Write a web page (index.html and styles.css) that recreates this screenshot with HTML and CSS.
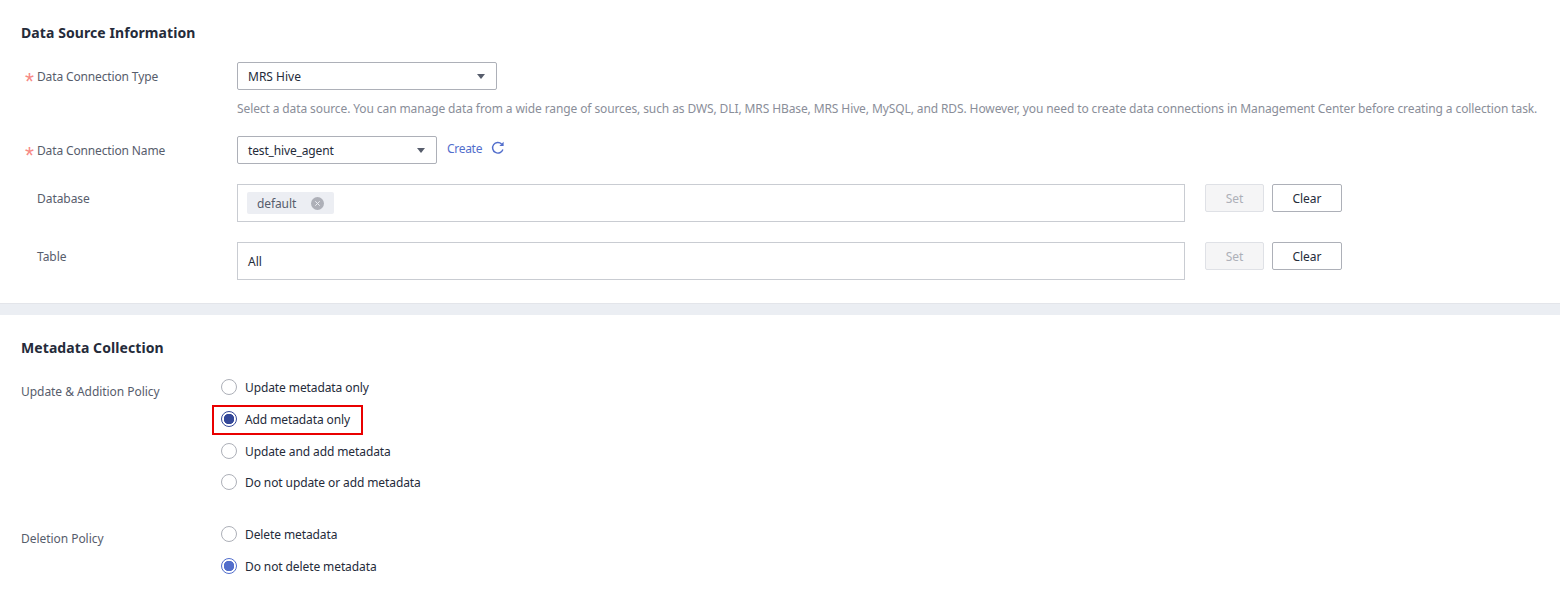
FILE: index.html
```html
<!DOCTYPE html>
<html lang="en">
<head>
<meta charset="utf-8">
<title>Data Source Information</title>
<link rel="stylesheet" href="styles.css">
</head>
<body>
<section class="panel panel-source">
  <h2 class="title">Data Source Information</h2>
  <div class="row row-type">
    <label class="label"><span class="req">*</span>Data Connection Type</label>
    <div class="field">
      <div class="select select-wide"><span>MRS Hive</span><i class="caret"></i></div>
      <p class="hint">Select a data source. You can manage data from a wide range of sources, such as DWS, DLI, MRS HBase, MRS Hive, MySQL, and RDS. However, you need to create data connections in Management Center before creating a collection task.</p>
    </div>
  </div>
  <div class="row row-name">
    <label class="label"><span class="req">*</span>Data Connection Name</label>
    <div class="field field-inline">
      <div class="select select-narrow"><span class="select-name">test_hive_agent</span><i class="caret"></i></div>
      <a class="link">Create</a>
      <svg class="refresh" width="14" height="14" viewBox="0 0 14 14"><path d="M11.9 8.6A5.3 5.3 0 1 1 10.6 3" fill="none" stroke="#526ecc" stroke-width="1.4"/><path d="M12.6 0.8V5H8.4z" fill="#526ecc"/></svg>
    </div>
  </div>
  <div class="row row-box row-db">
    <label class="label label-plain">Database</label>
    <div class="box"><span class="tag">default<svg class="tag-x" width="13" height="13" viewBox="0 0 13 13"><circle cx="6.5" cy="6.5" r="6.5" fill="#aeb0b8"/><path d="M4.3 4.3l4.4 4.4M8.7 4.3l-4.4 4.4" stroke="#eceef3" stroke-width="1"/></svg></span></div>
    <button class="btn btn-off">Set</button>
    <button class="btn">Clear</button>
  </div>
  <div class="row row-box row-table">
    <label class="label label-plain">Table</label>
    <div class="box box-text">All</div>
    <button class="btn btn-off">Set</button>
    <button class="btn">Clear</button>
  </div>
</section>
<div class="band"></div>
<section class="panel panel-meta">
  <h2 class="title">Metadata Collection</h2>
  <div class="policy policy-update">
    <div class="policy-label">Update &amp; Addition Policy</div>
    <div class="radios">
      <div class="radio"><i class="dot"></i>Update metadata only</div>
      <div class="radio marked"><i class="dot dot-dark"></i>Add metadata only</div>
      <div class="radio radio-short"><i class="dot"></i>Update and add metadata</div>
      <div class="radio"><i class="dot"></i>Do not update or add metadata</div>
    </div>
  </div>
  <div class="policy policy-delete">
    <div class="policy-label">Deletion Policy</div>
    <div class="radios">
      <div class="radio"><i class="dot"></i>Delete metadata</div>
      <div class="radio"><i class="dot dot-on"></i>Do not delete metadata</div>
    </div>
  </div>
</section>
</body>
</html>
```
FILE: styles.css
```css
* { box-sizing: border-box; }
html, body { margin: 0; padding: 0; }
body {
  width: 1560px;
  height: 593px;
  overflow: hidden;
  background: #fff;
  font-family: "Noto Sans", "Open Sans", sans-serif;
  font-size: 12px;
  color: #252b3a;
}
.panel { padding-left: 21px; }
.panel-source { height: 303px; padding-top: 23px; }
.panel-meta { padding-top: 23px; }
.title {
  margin: 0;
  font-size: 14px;
  font-weight: 700;
  line-height: 20px;
  letter-spacing: 0.08px;
  color: #252b3a;
}
.row { display: flex; align-items: flex-start; }
.row-type { margin-top: 19px; }
.row-name { margin-top: 17px; }
.row-db { margin-top: 19px; }
.row-table { margin-top: 20px; }
.label {
  width: 216px;
  height: 29px;
  flex: none;
  padding-top: 1px;
  line-height: 28px;
  color: #575d6c;
  padding-left: 4px;
  letter-spacing: -0.14px;
}
.label-plain { padding-left: 16px; letter-spacing: -0.05px; }
.req {
  display: inline-block;
  width: 12px;
  color: #f78a86;
  font-family: "Liberation Sans", sans-serif;
  font-size: 23px;
  line-height: 1;
  vertical-align: -9px;
}
.field { flex: 1; min-width: 0; }
.field-inline { display: flex; align-items: flex-start; }
.select {
  height: 28px;
  border: 1px solid #adb0b8;
  border-radius: 2px;
  display: flex;
  align-items: center;
  justify-content: space-between;
  padding: 0 11px 0 10px;
  color: #252b3a;
}
.select-wide { width: 260px; }
.select-narrow { width: 200px; }
.select-name { letter-spacing: -0.15px; }
.caret {
  width: 0;
  height: 0;
  border-left: 4.5px solid transparent;
  border-right: 4.5px solid transparent;
  border-top: 5px solid #575d6c;
}
.hint {
  margin: 9px 0 0;
  line-height: 20px;
  color: #8a8e99;
  white-space: nowrap;
  letter-spacing: -0.105px;
}
.link { margin-left: 10px; line-height: 25px; color: #526ecc; letter-spacing: -0.3px; }
.refresh { margin: 5px 0 0 9px; }
.box {
  width: 948px;
  height: 38px;
  flex: none;
  border: 1px solid #c9ccd2;
  padding: 7px 9px;
}
.box-text { padding: 0 10px; line-height: 37px; color: #252b3a; }
.tag {
  display: inline-flex;
  align-items: center;
  height: 22px;
  padding: 0 10px;
  background: #eceef3;
  border-radius: 2px;
  color: #575d6c;
  letter-spacing: -0.1px;
}
.tag-x { margin-left: 15px; }
.btn {
  flex: none;
  width: 70px;
  height: 28px;
  margin-left: 8px;
  padding: 0;
  border: 1px solid #adb0b8;
  border-radius: 2px;
  background: #fff;
  color: #252b3a;
  font: inherit;
}
.btn-off {
  width: 59px;
  margin-left: 20px;
  border-color: #dfe1e6;
  background: #f5f5f6;
  color: #adb0b8;
}
.band {
  height: 12px;
  background: #ebeef3;
  border-top: 1px solid #e3e5ea;
}
.policy { display: flex; align-items: flex-start; }
.policy-label { width: 200px; flex: none; color: #575d6c; line-height: 20px; letter-spacing: -0.05px; }
.policy-update { margin-top: 13px; }
.policy-update .policy-label { margin-top: 11px; }
.policy-delete { margin-top: 20px; }
.policy-delete .policy-label { margin-top: 11px; }
.radio {
  position: relative;
  display: flex;
  align-items: center;
  height: 32px;
  color: #252b3a;
  letter-spacing: -0.1px;
}
.radio-short { margin-bottom: -1px; }
.dot {
  flex: none;
  width: 16px;
  height: 16px;
  margin-right: 8px;
  border: 1px solid #adb0b8;
  border-radius: 50%;
  background: #fff;
}
.dot-dark { border-color: #344899; background: radial-gradient(circle, #344899 0 5px, #fff 5.5px); }
.dot-on { border-color: #526ecc; background: radial-gradient(circle, #526ecc 0 5px, #fff 5.5px); }
.marked::after {
  content: "";
  box-sizing: border-box;
  position: absolute;
  left: -9px;
  top: 2px;
  width: 151px;
  height: 30px;
  border: 2px solid #e90000;
}
```
